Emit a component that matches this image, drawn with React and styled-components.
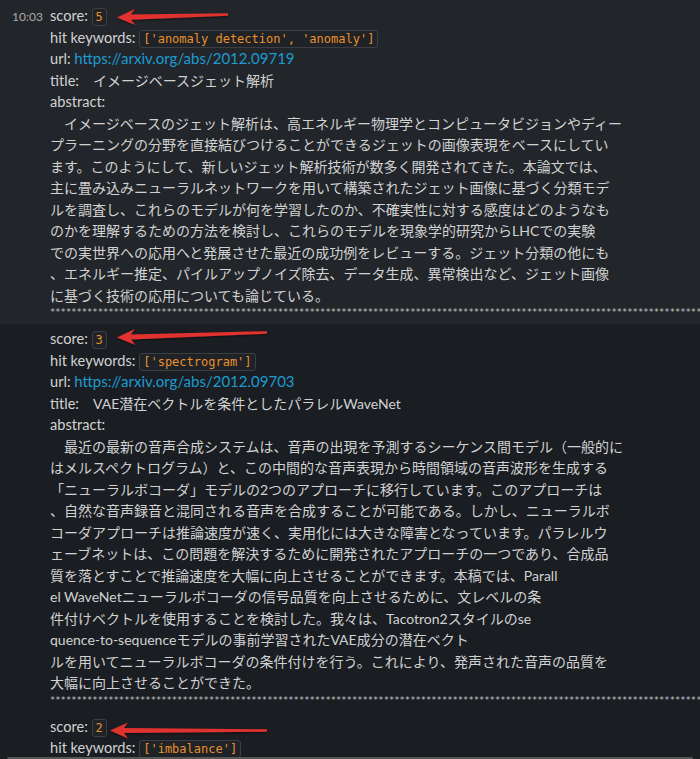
import styled, { createGlobalStyle } from "styled-components";

const GlobalStyle = createGlobalStyle`
  html, body {
    margin: 0;
    padding: 0;
    background: #1a1d21;
    overflow: hidden;
  }
`;

const Page = styled.div`
  position: relative;
  width: 700px;
  height: 759px;
  overflow: hidden;
  display: flex;
  flex-direction: column;
  background: #1a1d21;
  font-family: "Lato", "Noto Sans CJK JP", sans-serif;
  font-size: 14px;
  line-height: 21.5px;
  color: #d1d2d3;
`;

const MessageList = styled.div`
  height: 757px;
  flex-shrink: 0;
  overflow: hidden;
`;

const Message = styled.div`
  display: grid;
  grid-template-columns: 50px 1fr;
  padding: ${(p) => (p.$first ? "5px" : "4px")} 0 6px;
  background: ${(p) => (p.$hover ? "#222529" : "transparent")};
`;

const Gutter = styled.div`
  padding-left: 12px;
  font-size: 12px;
  color: #ababad;
  line-height: 21.5px;
  padding-top: 1px;
`;

const Body = styled.div`
  min-width: 0;
`;

const Line = styled.div`
  white-space: pre;
`;

const Field = styled(Line)`
  font-size: 14.6px;
`;

const Value = styled.span`
  font-size: 14px;
`;

const Code = styled.code`
  font-family: "DejaVu Sans Mono", monospace;
  font-size: 12px;
  line-height: 16px;
  color: #e8912d;
  background: #1f2226;
  border: 1px solid #3b3e42;
  border-radius: 3px;
  padding: 1px 3px;
`;

const Link = styled.a`
  color: #1d9bd1;
  text-decoration: none;
  font-size: 15px;
`;

const Stars = styled.div`
  font-family: "DejaVu Sans Mono", monospace;
  font-size: 8.8px;
  line-height: 12px;
  color: #c4c5c7;
  white-space: nowrap;
  overflow: hidden;
`;

const Composer = styled.div`
  margin: 0 7px;
  height: 80px;
  border: 1px solid #565856;
  border-radius: 8px;
  background: #222529;
`;

const Overlay = styled.svg`
  position: absolute;
  left: 0;
  top: 0;
  pointer-events: none;
`;

const STARS = "*".repeat(140);

const messages = [
  {
    time: "10:03",
    hover: true,
    score: "5",
    keywords: "['anomaly detection', 'anomaly']",
    url: "https://arxiv.org/abs/2012.09719",
    title: "イメージベースジェット解析",
    abstract: [
      "\u3000イメージベースのジェット解析は、高エネルギー物理学とコンピュータビジョンやディー",
      "プラーニングの分野を直接結びつけることができるジェットの画像表現をベースにしてい",
      "ます。このようにして、新しいジェット解析技術が数多く開発されてきた。本論文では、",
      "主に畳み込みニューラルネットワークを用いて構築されたジェット画像に基づく分類モデ",
      "ルを調査し、これらのモデルが何を学習したのか、不確実性に対する感度はどのようなも",
      "のかを理解するための方法を検討し、これらのモデルを現象学的研究からLHCでの実験",
      "での実世界への応用へと発展させた最近の成功例をレビューする。ジェット分類の他にも",
      "、エネルギー推定、パイルアップノイズ除去、データ生成、異常検出など、ジェット画像",
      "に基づく技術の応用についても論じている。",
    ],
  },
  {
    score: "3",
    keywords: "['spectrogram']",
    url: "https://arxiv.org/abs/2012.09703",
    title: "VAE潜在ベクトルを条件としたパラレルWaveNet",
    abstract: [
      "\u3000最近の最新の音声合成システムは、音声の出現を予測するシーケンス間モデル（一般的に",
      "はメルスペクトログラム）と、この中間的な音声表現から時間領域の音声波形を生成する",
      "「ニューラルボコーダ」モデルの2つのアプローチに移行しています。このアプローチは",
      "、自然な音声録音と混同される音声を合成することが可能である。しかし、ニューラルボ",
      "コーダアプローチは推論速度が速く、実用化には大きな障害となっています。パラレルウ",
      "ェーブネットは、この問題を解決するために開発されたアプローチの一つであり、合成品",
      "質を落とすことで推論速度を大幅に向上させることができます。本稿では、Parall",
      "el WaveNetニューラルボコーダの信号品質を向上させるために、文レベルの条",
      "件付けベクトルを使用することを検討した。我々は、Tacotron2スタイルのse",
      "quence-to-sequenceモデルの事前学習されたVAE成分の潜在ベクト",
      "ルを用いてニューラルボコーダの条件付けを行う。これにより、発声された音声の品質を",
      "大幅に向上させることができた。",
    ],
  },
  {
    score: "2",
    keywords: "['imbalance']",
  },
];

// red annotation arrows, page coordinates: tip -> tail
const arrows = [
  { tip: [117, 17.5], tail: [228, 14.5] },
  { tip: [117, 337.5], tail: [267, 332.5] },
  { tip: [110, 730.5], tail: [267, 730.5] },
];

const arrowPoints = ({ tip, tail }) => {
  const dx = tail[0] - tip[0];
  const dy = tail[1] - tip[1];
  const len = Math.hypot(dx, dy);
  const d = [dx / len, dy / len];
  const n = [-d[1], d[0]];
  const at = (along, side) => [
    tip[0] + d[0] * along + n[0] * side,
    tip[1] + d[1] * along + n[1] * side,
  ];
  const pts = [
    tip,
    at(18, 8),
    at(14, 2.6),
    [tail[0] + n[0] * 1.3, tail[1] + n[1] * 1.3],
    [tail[0] - n[0] * 1.3, tail[1] - n[1] * 1.3],
    at(14, -2.6),
    at(18, -8),
  ];
  return pts.map((p) => p.map((v) => v.toFixed(1)).join(",")).join(" ");
};

const MessageRow = ({ msg, first }) => (
  <Message $hover={msg.hover} $first={first}>
    <Gutter>{msg.time || ""}</Gutter>
    <Body>
      <Field>
        score: <Code>{msg.score}</Code>
      </Field>
      <Field>
        hit keywords: <Code>{msg.keywords}</Code>
      </Field>
      {msg.url && (
        <>
          <Field>
            url: <Link href={msg.url}>{msg.url}</Link>
          </Field>
          <Field>
            title:<Value>{"\u3000" + msg.title}</Value>
          </Field>
          <Field>abstract:</Field>
          {msg.abstract.map((l, i) => (
            <Line key={i}>{l}</Line>
          ))}
          <Stars>{STARS}</Stars>
        </>
      )}
    </Body>
  </Message>
);

const App = () => (
  <Page>
    <GlobalStyle />
    <MessageList>
      {messages.map((m, i) => (
        <MessageRow key={i} msg={m} first={i === 0} />
      ))}
    </MessageList>
    <Composer />
    <Overlay width="700" height="759" viewBox="0 0 700 759">
      <defs>
        <filter id="shadow" x="-10%" y="-50%" width="120%" height="200%">
          <feDropShadow dx="0" dy="1" stdDeviation="1" floodColor="#000" floodOpacity="0.5" />
        </filter>
      </defs>
      {arrows.map((a, i) => (
        <polygon key={i} points={arrowPoints(a)} fill="#e0302f" filter="url(#shadow)" />
      ))}
    </Overlay>
  </Page>
);

export default App;
